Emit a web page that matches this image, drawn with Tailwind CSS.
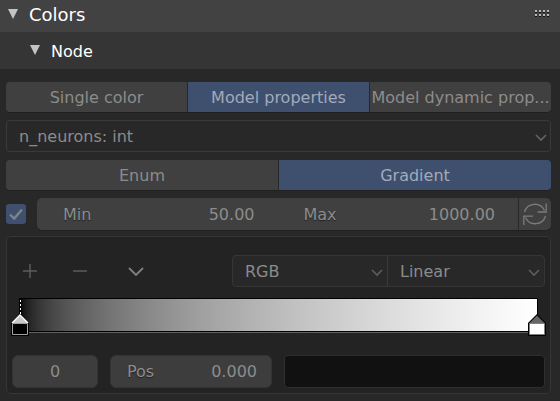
<!DOCTYPE html>
<html lang="en">
<head>
<meta charset="utf-8">
<meta name="viewport" content="width=device-width, initial-scale=1">
<title>Colors</title>
<script src="https://cdn.jsdelivr.net/npm/@tailwindcss/browser@4"></script>
</head>
<body class="min-h-screen bg-[#282828] font-['DejaVu_Sans',sans-serif] text-base leading-5 text-[#8c8c8c] text-shadow-[0_1px_1px_rgb(0_0_0/0.5)]">
<header class="flex h-8 items-center justify-between bg-[#424242] pr-2.5 pl-2 text-white">
  <button type="button" aria-expanded="true" class="flex items-center gap-[11px] text-lg leading-6">
    <svg class="mb-1 h-2.5 w-2.5" viewBox="0 0 10 10" aria-hidden="true"><path d="M0 0H10L5 10Z" fill="#c4c4c4"/></svg>
    <span class="-mt-0.5">Colors</span>
  </button>
  <svg class="mb-1 h-2 w-4" viewBox="0 0 16 8" shape-rendering="crispEdges" aria-hidden="true">
    <path d="M1 2h2M5 2h2M9 2h2M13 2h2M1 6h2M5 6h2M9 6h2M13 6h2" stroke="#111" stroke-width="2"/>
    <path d="M1 1h2M5 1h2M9 1h2M13 1h2M1 5h2M5 5h2M9 5h2M13 5h2" stroke="#b8b8b8" stroke-width="2"/>
  </svg>
</header>
<div class="flex h-[37px] items-center bg-[#353535] pl-[30px] text-white">
  <button type="button" aria-expanded="true" class="flex items-center gap-[11px] pt-0.5">
    <svg class="mb-1 h-2.5 w-2.5" viewBox="0 0 10 10" aria-hidden="true"><path d="M0 0H10L5 10Z" fill="#c4c4c4"/></svg>
    <span>Node</span>
  </button>
</div>
<main class="flex flex-col gap-2 pt-[13px] pr-[9px] pb-[7px] pl-1.5">
  <div role="group" aria-label="Color source" class="grid h-[30px] grid-cols-3 gap-px overflow-hidden rounded-[4px] shadow-[0_1px_0_#202020]">
    <button type="button" aria-pressed="false" class="bg-[#404040] pt-0.5">Single color</button>
    <button type="button" aria-pressed="true" class="bg-[#3f4f6e] pt-0.5 text-[#a2aaba]">Model properties</button>
    <button type="button" aria-pressed="false" class="bg-[#404040] pt-0.5 whitespace-nowrap">Model dynamic prop...</button>
  </div>
  <div class="relative h-8">
    <select aria-label="Property" class="h-full w-full appearance-none rounded-[4px] border border-[#3a3a3a] bg-[#282828] pt-0.5 pl-3">
      <option>n_neurons: int</option>
    </select>
    <svg class="pointer-events-none absolute top-3.5 right-1 h-2 w-3" viewBox="0 0 12 8" fill="none" stroke="#636363" stroke-width="1.6" aria-hidden="true"><path d="M1 1L6 6L11 1"/></svg>
  </div>
  <div role="group" aria-label="Mapping" class="grid h-[30px] grid-cols-2 gap-px overflow-hidden rounded-[4px] shadow-[0_1px_0_#202020]">
    <button type="button" aria-pressed="false" class="bg-[#404040] pt-0.5">Enum</button>
    <button type="button" aria-pressed="true" class="bg-[#3f4f6e] pt-0.5 text-[#a2aaba]">Gradient</button>
  </div>
  <div class="flex h-8 items-center gap-[11px]">
    <label class="relative h-5 w-5 shrink-0">
      <input type="checkbox" checked aria-label="Use range" class="block h-5 w-5 appearance-none rounded-[3px] bg-[#3f4f6e]">
      <svg class="pointer-events-none absolute inset-0 h-5 w-5" viewBox="0 0 20 20" fill="none" stroke="#7d838b" stroke-width="2.4" aria-hidden="true"><path d="M4 10.5L8.2 14.5L16 5.5"/></svg>
    </label>
    <div class="flex h-8 min-w-0 flex-1 gap-px overflow-hidden rounded-[5px] shadow-[0_1px_0_#202020]">
      <div class="grid min-w-0 flex-1 grid-cols-2 bg-[#404040]">
        <label class="flex min-w-0 items-center pt-0.5 pr-[23px] pl-[26px]">Min<input type="text" value="50.00" class="min-w-0 flex-1 bg-transparent text-right"></label>
        <label class="flex min-w-0 items-center pt-0.5 pr-[23px] pl-[26px]">Max<input type="text" value="1000.00" class="min-w-0 flex-1 bg-transparent text-right"></label>
      </div>
      <button type="button" aria-label="Refresh range" class="flex w-8 shrink-0 items-center justify-center bg-[#404040]">
        <svg class="h-6 w-6" viewBox="0 0 24 24" fill="none" stroke="#7c7c7c" stroke-width="1.3" aria-hidden="true"><path d="M1.5 10A10.7 10.7 0 0 1 21.5 8.5M23.2 1.5V10H14.5M22.5 14A10.7 10.7 0 0 1 2.5 15.5M.8 23V14.2H10"/></svg>
      </button>
    </div>
  </div>
  <section aria-label="Color ramp" class="-mt-0.5 rounded-[5px] border border-[#363636] bg-[#232323] px-[5px] pt-[18px] pb-[5px]">
    <div class="flex h-8 items-center">
      <div class="flex flex-1 items-center pl-2.5">
        <button type="button" aria-label="Add stop" class="h-4 w-4"><svg class="h-4 w-4" viewBox="0 0 16 16" fill="none" stroke="#5c5c5c" stroke-width="1.5" aria-hidden="true"><path d="M1 8H15M8 1V15"/></svg></button>
        <button type="button" aria-label="Remove stop" class="ml-[34px] h-4 w-4"><svg class="h-4 w-4" viewBox="0 0 16 16" fill="none" stroke="#5c5c5c" stroke-width="1.5" aria-hidden="true"><path d="M1 8H15"/></svg></button>
        <button type="button" aria-label="Ramp tools" class="ml-10 h-4 w-4"><svg class="h-4 w-4" viewBox="0 0 16 16" fill="none" stroke="#808080" stroke-width="1.8" aria-hidden="true"><path d="M1 5L8 12L15 5"/></svg></button>
      </div>
      <div class="flex h-8 w-[313px] rounded-[4px] border border-[#363636] bg-[#282828]">
        <div class="relative w-[155px] border-r border-[#3a3a3a]">
          <select aria-label="Color mode" class="h-full w-full appearance-none pt-0.5 pl-3"><option>RGB</option></select>
          <svg class="pointer-events-none absolute top-[13px] right-1 h-2 w-3" viewBox="0 0 12 8" fill="none" stroke="#5e5e5e" stroke-width="1.6" aria-hidden="true"><path d="M1 1L6 6L11 1"/></svg>
        </div>
        <div class="relative flex-1">
          <select aria-label="Interpolation" class="h-full w-full appearance-none pt-0.5 pl-3"><option>Linear</option></select>
          <svg class="pointer-events-none absolute top-[13px] right-1 h-2 w-3" viewBox="0 0 12 8" fill="none" stroke="#5e5e5e" stroke-width="1.6" aria-hidden="true"><path d="M1 1L6 6L11 1"/></svg>
        </div>
      </div>
    </div>
    <div class="relative mx-[7px] mt-[11px] h-[34px] border border-black bg-[linear-gradient(to_right_in_srgb-linear,#000,#fff)] shadow-[0_1px_0_#606060]">
      <button type="button" aria-label="Stop 0" class="absolute top-0 -left-[9px] h-[37px] w-[18px]">
        <svg class="h-[37px] w-[18px]" viewBox="0 0 18 37" aria-hidden="true">
          <path d="M9 1V17" stroke="#000" stroke-width="1"/><path d="M9 1V17" stroke="#fff" stroke-width="1" stroke-dasharray="2 2" shape-rendering="crispEdges"/>
          <path d="M0 24L9 15L18 24V37H0Z" fill="#000"/><path d="M1 24L9 16L17 24Z" fill="#c8c8c8"/><path d="M1 24L9 16L17 24" fill="none" stroke="#fff" stroke-width="1.4"/>
          <path d="M1.5 24.5H16.5V35.5H1.5Z" fill="#000" stroke="#a0a0a0"/>
        </svg>
      </button>
      <button type="button" aria-label="Stop 1" class="absolute top-0 -right-[9px] h-[37px] w-[18px]">
        <svg class="h-[37px] w-[18px]" viewBox="0 0 18 37" aria-hidden="true">
          <path d="M0 24L9 15L18 24V37H0Z" fill="#000"/><path d="M1.5 24L9 16.5L16.5 24Z" fill="#666"/>
          <path d="M1.5 24.5H16.5V35.5H1.5Z" fill="#fff" stroke="#808080"/>
        </svg>
      </button>
    </div>
    <div class="mt-[23px] flex h-[33px] items-stretch gap-3">
      <input type="text" value="0" aria-label="Stop index" class="w-[86px] shrink-0 rounded-[6px] border border-[#333] bg-[#3d3d3d] text-center">
      <label class="flex w-[162px] shrink-0 items-center rounded-[6px] border border-[#333] bg-[#3d3d3d] pr-3.5 pl-4">Pos<input type="text" value="0.000" class="min-w-0 flex-1 bg-transparent text-right"></label>
      <button type="button" aria-label="Stop color" class="flex-1 rounded-[4px] border border-[#2e2e2e] bg-[#111]"></button>
    </div>
  </section>
</main>
</body>
</html>
